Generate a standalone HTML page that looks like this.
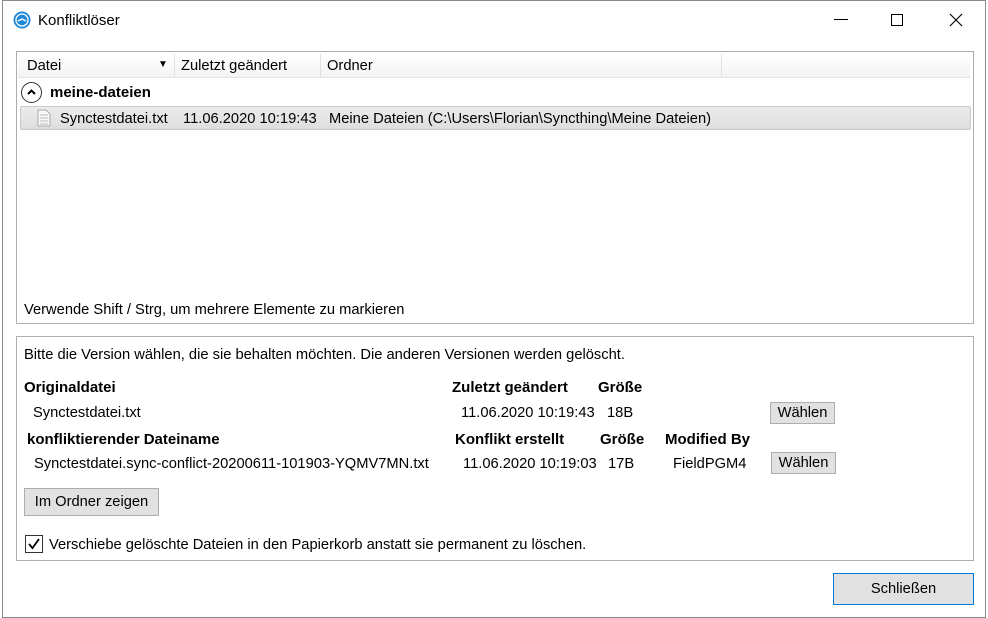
<!DOCTYPE html>
<html><head><meta charset="utf-8"><style>
*{margin:0;padding:0;box-sizing:border-box}
body{width:988px;height:618px;background:#fff;position:relative;overflow:hidden;font-family:"Liberation Sans",sans-serif;font-size:14.7px;color:#000}
.a{position:absolute;white-space:nowrap}
.b{font-weight:bold;font-size:15px}
.win{position:absolute;left:2px;top:0px;width:984px;height:618px;border:1px solid #888;background:#fff}
.btn{position:absolute;background:#e1e1e1;border:1px solid #adadad;text-align:center}
</style></head><body>
<div class="win"></div>
<svg class="a" style="left:13px;top:11px" width="18" height="18" viewBox="0 0 18 18"><circle cx="9" cy="9" r="8.5" fill="#1e88d8"/><circle cx="9" cy="9" r="6" fill="none" stroke="#fff" stroke-width="1.3"/><path d="M5 10 L9 8 L13 10" stroke="#fff" stroke-width="1.3" fill="none"/></svg>
<div class="a" style="left:38px;top:12px;font-size:15px">Konfliktlöser</div>
<div class="a" style="left:834px;top:19px;width:14px;height:1px;background:#000"></div>
<div class="a" style="left:891px;top:14px;width:12px;height:12px;border:1px solid #000"></div>
<svg class="a" style="left:949px;top:13px" width="14" height="14"><path d="M1 1L13 13M13 1L1 13" stroke="#000" stroke-width="1.1"/></svg>

<div class="a" style="left:16px;top:51px;width:958px;height:273px;border:1px solid #adadad;background:#fff"></div>
<div class="a" style="left:18px;top:53px;width:952px;height:25px;background:linear-gradient(#fff,#f3f3f3);border-bottom:1px solid #e5e5e5"></div>
<div class="a" style="left:174px;top:54px;width:1px;height:23px;background:#e0e0e0"></div>
<div class="a" style="left:320px;top:54px;width:1px;height:23px;background:#e0e0e0"></div>
<div class="a" style="left:721px;top:54px;width:1px;height:23px;background:#e0e0e0"></div>
<div class="a" style="left:27px;top:58px">Datei</div>
<div class="a" style="left:158px;top:59px;font-size:10px">▼</div>
<div class="a" style="left:181px;top:58px">Zuletzt geändert</div>
<div class="a" style="left:327px;top:58px">Ordner</div>
<div class="a" style="left:21px;top:82px;width:21px;height:21px;border:1.5px solid #333;border-radius:50%"></div>
<svg class="a" style="left:26px;top:87px" width="11" height="11"><path d="M2 7L5.5 3.5L9 7" stroke="#000" stroke-width="2" fill="none"/></svg>
<div class="a b" style="left:50px;top:84px">meine-dateien</div>
<div class="a" style="left:20px;top:106px;width:951px;height:24px;background:linear-gradient(#ececec,#dedede);border:1px solid #c8c8c8;border-radius:2px"></div>
<svg class="a" style="left:37px;top:109px" width="14" height="18"><path d="M1 1H9L13 5V17H1Z" fill="#f8f8f8" stroke="#aaa"/><path d="M3 6H11M3 9H11M3 12H11M3 15H11" stroke="#bbb"/></svg>
<div class="a" style="left:60px;top:111px">Synctestdatei.txt</div>
<div class="a" style="left:183px;top:111px">11.06.2020 10:19:43</div>
<div class="a" style="left:329px;top:111px">Meine Dateien (C:\Users\Florian\Syncthing\Meine Dateien)</div>
<div class="a" style="left:24px;top:302px">Verwende Shift / Strg, um mehrere Elemente zu markieren</div>

<div class="a" style="left:16px;top:336px;width:958px;height:225px;border:1px solid #adadad;background:#fff"></div>
<div class="a" style="left:24px;top:347px">Bitte die Version wählen, die sie behalten möchten. Die anderen Versionen werden gelöscht.</div>
<div class="a b" style="left:24px;top:379px">Originaldatei</div>
<div class="a b" style="left:452px;top:379px">Zuletzt geändert</div>
<div class="a b" style="left:598px;top:379px">Größe</div>
<div class="a" style="left:33px;top:405px">Synctestdatei.txt</div>
<div class="a" style="left:461px;top:405px">11.06.2020 10:19:43</div>
<div class="a" style="left:607px;top:405px">18B</div>
<div class="btn" style="left:770px;top:402px;width:65px;height:22px;line-height:20px">Wählen</div>
<div class="a b" style="left:27px;top:431px">konfliktierender Dateiname</div>
<div class="a b" style="left:455px;top:431px">Konflikt erstellt</div>
<div class="a b" style="left:600px;top:431px">Größe</div>
<div class="a b" style="left:665px;top:431px">Modified By</div>
<div class="a" style="left:34px;top:456px">Synctestdatei.sync-conflict-20200611-101903-YQMV7MN.txt</div>
<div class="a" style="left:463px;top:456px">11.06.2020 10:19:03</div>
<div class="a" style="left:608px;top:456px">17B</div>
<div class="a" style="left:673px;top:456px">FieldPGM4</div>
<div class="btn" style="left:771px;top:452px;width:65px;height:22px;line-height:20px">Wählen</div>
<div class="btn" style="left:24px;top:488px;width:135px;height:28px;line-height:26px">Im Ordner zeigen</div>
<div class="a" style="left:25px;top:535px;width:18px;height:18px;border:1px solid #333;background:#fff"></div>
<svg class="a" style="left:27px;top:537px" width="14" height="14"><path d="M2 7L5.5 11L12 2" stroke="#000" stroke-width="1.8" fill="none"/></svg>
<div class="a" style="left:49px;top:537px">Verschiebe gelöschte Dateien in den Papierkorb anstatt sie permanent zu löschen.</div>

<div class="btn" style="left:833px;top:573px;width:141px;height:32px;line-height:30px;border:1px solid #0078d7">Schließen</div>
</body></html>
